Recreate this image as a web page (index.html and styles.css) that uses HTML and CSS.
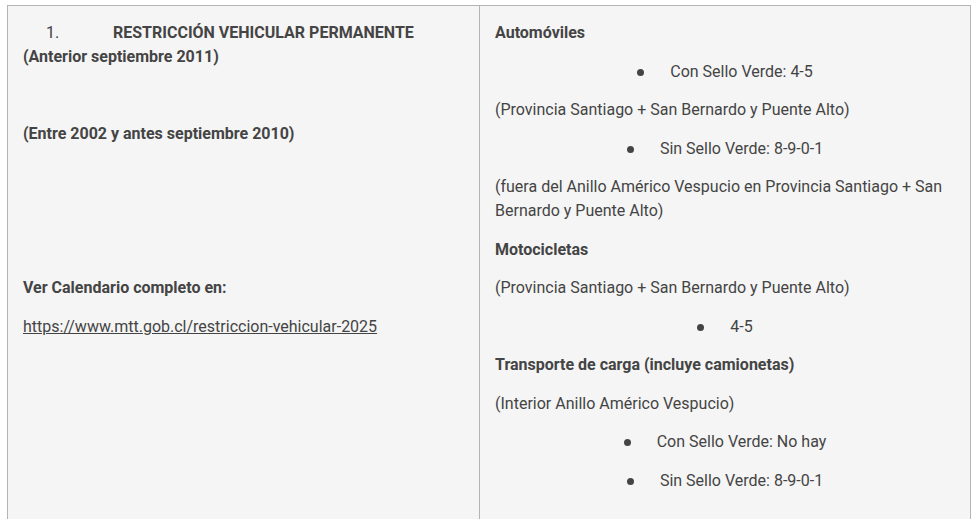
FILE: index.html
```html
<!DOCTYPE html>
<html lang="es">
<head>
<meta charset="utf-8">
<title>Restricción vehicular</title>
<link rel="stylesheet" href="styles.css">
</head>
<body>
<div class="table">
  <div class="cell cell-left">
    <div class="title-row"><span class="num">1.</span><strong>RESTRICCIÓN VEHICULAR PERMANENTE</strong></div>
    <p class="b">(Anterior septiembre 2011)</p>
    <p>&nbsp;</p>
    <p class="b">(Entre 2002 y antes septiembre 2010)</p>
    <p>&nbsp;</p>
    <p>&nbsp;</p>
    <p>&nbsp;</p>
    <p class="b">Ver Calendario completo en:</p>
    <p><a href="#" class="link">https://www.mtt.gob.cl/restriccion-vehicular-2025</a></p>
  </div>
  <div class="cell cell-right">
    <p class="b">Automóviles</p>
    <div class="bullet"><span class="dot"></span><span>Con Sello Verde: 4-5</span></div>
    <p>(Provincia Santiago + San Bernardo y Puente Alto)</p>
    <div class="bullet"><span class="dot"></span><span>Sin Sello Verde: 8-9-0-1</span></div>
    <p>(fuera del Anillo Américo Vespucio en Provincia Santiago + San Bernardo y Puente Alto)</p>
    <p class="b">Motocicletas</p>
    <p>(Provincia Santiago + San Bernardo y Puente Alto)</p>
    <div class="bullet"><span class="dot"></span><span>4-5</span></div>
    <p class="b">Transporte de carga (incluye camionetas)</p>
    <p>(Interior Anillo Américo Vespucio)</p>
    <div class="bullet"><span class="dot"></span><span>Con Sello Verde: No hay</span></div>
    <div class="bullet"><span class="dot"></span><span>Sin Sello Verde: 8-9-0-1</span></div>
  </div>
</div>
</body>
</html>
```
FILE: styles.css
```css
html, body {
  margin: 0;
  background: #ffffff;
}
body {
  padding: 5px 0 0 7px;
  font-family: Roboto, "Liberation Sans", sans-serif;
  font-size: 16px;
  line-height: 24px;
  color: #444444;
}
.table {
  display: grid;
  grid-template-columns: 472px 490px;
  width: 964px;
  box-sizing: border-box;
  border: 1px solid #b4b4b4;
  border-bottom: none;
  background: #f5f5f5;
}
.cell {
  padding: 15px 15px 30px 15px;
}
.cell-left {
  border-right: 1px solid #b4b4b4;
}
p {
  margin: 0 0 14.5px 0;
}
.b {
  font-weight: 700;
}
.title-row {
  display: flex;
  margin: 0;
}
.num {
  display: inline-block;
  width: 67px;
  margin-left: 23px;
  font-weight: 400;
}
.link {
  color: #444444;
  text-decoration: underline;
}
.bullet {
  display: flex;
  justify-content: center;
  align-items: center;
  margin: 0 0 14.5px 0;
}
.dot {
  width: 7px;
  height: 7px;
  border-radius: 50%;
  background: #444444;
  margin-right: 26px;
  margin-top: 1px;
}
```
